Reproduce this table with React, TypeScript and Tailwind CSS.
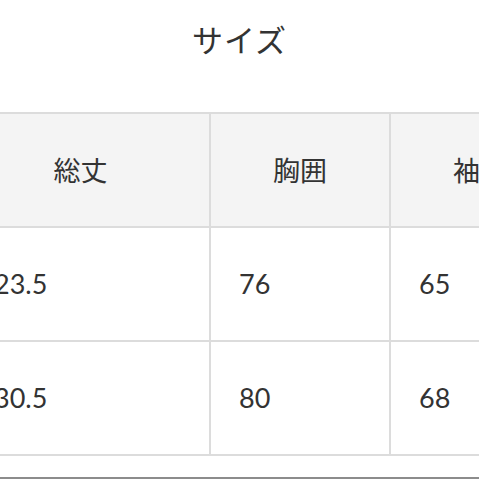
import React from 'react';

const headers = ['総丈', '胸囲', '袖丈'];
const rows = [
  ['23.5', '76', '65'],
  ['30.5', '80', '68'],
];

const widths = ['w-[245px]', 'w-[180px]', 'w-[180px]'];

export default function App() {
  return (
    <div
      className="relative w-[479px] h-[479px] overflow-hidden bg-white text-[#333]"
      style={{ fontFamily: '"Noto Sans CJK JP", "Noto Sans", sans-serif' }}
    >
      {/* Title */}
      <div className="h-[78px] flex items-center justify-center text-[31px] tracking-[1px]">サイズ</div>

      {/* Size table */}
      <div className="mt-[34px] ml-[-34px] w-[605px] border-t-2 border-[#dcdcdc]">
        <div className="flex h-[114px] border-b-2 border-[#dcdcdc] bg-[#f4f4f4]">
          {headers.map((h, i) => (
            <div
              key={h}
              className={`${widths[i]} shrink-0 flex items-center justify-center border-r-2 border-[#dcdcdc] text-[27px] ${
                i === 0 ? 'pr-[14px]' : ''
              }`}
            >
              {h}
            </div>
          ))}
        </div>
        {rows.map((r, ri) => (
          <div key={ri} className="flex h-[114px] border-b-2 border-[#dcdcdc]">
            {r.map((v, i) => (
              <div
                key={i}
                className={`${widths[i]} shrink-0 flex items-center pl-[28px] border-r-2 border-[#dcdcdc] text-[27px]`}
                style={{ fontFamily: 'Lato, "Noto Sans", sans-serif' }}
              >
                {v}
              </div>
            ))}
          </div>
        ))}
      </div>

      <div className="mt-[21px] h-[2px] bg-[#8c8c8c]" />
    </div>
  );
}
